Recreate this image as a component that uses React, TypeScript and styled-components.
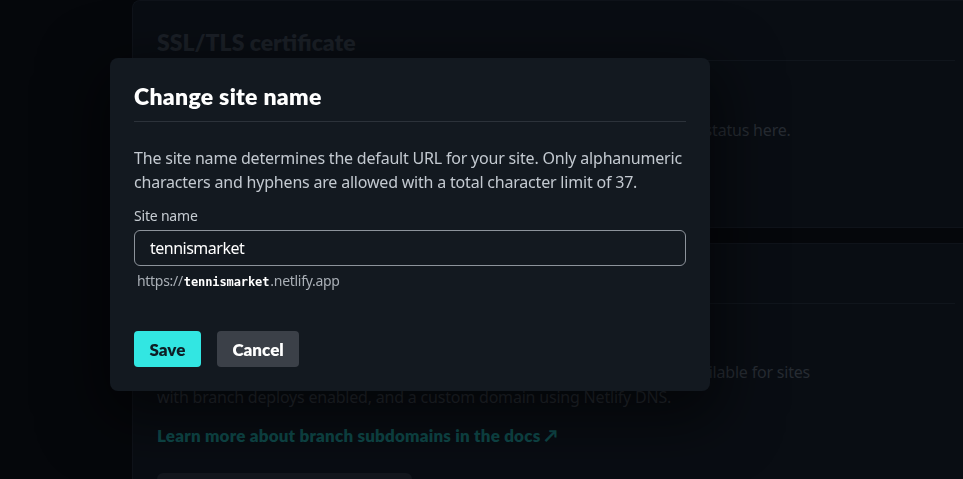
import React from "react";
import styled, { createGlobalStyle } from "styled-components";

const GlobalStyle = createGlobalStyle`
  html, body {
    margin: 0;
    padding: 0;
    background: #05070b;
    font-family: "Noto Sans", "Open Sans", sans-serif;
    overflow: hidden;
  }
`;

const Page = styled.div`
  width: 963px;
  height: 479px;
  padding-left: 132px;
  box-sizing: border-box;
  display: flex;
  flex-direction: column;
  gap: 15px;
  overflow: hidden;
`;

const Card = styled.section<{ $height: number }>`
  height: ${(p) => p.$height}px;
  background: #090d13;
  border: 1px solid #0f131a;
  border-right: none;
  border-radius: 8px 0 0 8px;
  flex-shrink: 0;
`;

const CardHeader = styled.div`
  height: 60px;
  box-sizing: border-box;
  padding: 22px 24px 0;
  display: flex;
  align-items: center;
  margin-right: 8px;
  border-bottom: 1px solid #10151c;
`;

const CardTitle = styled.h2`
  margin: 0;
  font-family: Lato, "Open Sans", sans-serif;
  font-size: 23px;
  font-weight: 800;
  color: #1b2027;
`;

const CardBody = styled.div<{ $pad: string }>`
  padding: ${(p) => p.$pad};
  display: flex;
  flex-direction: column;
  align-items: flex-start;
`;

const Muted = styled.p`
  margin: 0;
  font-size: 16px;
  line-height: 25px;
  letter-spacing: -0.2px;
  color: #262b32;
  white-space: nowrap;
`;

const DocLink = styled.a`
  margin-top: 15px;
  font-family: Lato, "Open Sans", sans-serif;
  font-size: 17px;
  letter-spacing: 0.2px;
  font-weight: 800;
  color: #0f4a4b;
  text-decoration: none;
`;

const GhostButton = styled.div`
  margin-top: 27px;
  width: 255px;
  height: 36px;
  border-radius: 6px;
  background: #13171d;
`;

const Modal = styled.div`
  position: fixed;
  left: 110px;
  top: 58px;
  width: 600px;
  box-sizing: border-box;
  padding: 24px;
  background: #131920;
  border-radius: 8px;
  box-shadow: 0 20px 60px 10px rgba(0, 0, 0, 0.55);
`;

const ModalHeader = styled.div`
  padding-bottom: 11px;
  border-bottom: 1px solid #2c323a;
`;

const ModalTitle = styled.h1`
  margin: 0;
  font-family: Lato, "Open Sans", sans-serif;
  font-size: 23px;
  line-height: 28px;
  letter-spacing: 0.3px;
  font-weight: 800;
  color: #ffffff;
`;

const Description = styled.p`
  margin: 24px 0 0;
  font-size: 16px;
  line-height: 24px;
  letter-spacing: -0.2px;
  white-space: nowrap;
  color: #c3c9d0;
`;

const Label = styled.label`
  display: block;
  margin-top: 12px;
  font-size: 14px;
  line-height: 20px;
  letter-spacing: -0.2px;
  color: #c6ccd2;
`;

const Input = styled.div`
  margin-top: 4px;
  height: 36px;
  box-sizing: border-box;
  border: 1px solid #8d939b;
  border-radius: 6px;
  padding: 0 15px;
  display: flex;
  align-items: center;
  font-size: 16px;
  letter-spacing: -0.5px;
  color: #ffffff;
`;

const Helper = styled.div`
  margin-top: 5px;
  padding-left: 3px;
  display: flex;
  align-items: baseline;
  height: 20px;
  font-size: 14px;
  line-height: 20px;
  letter-spacing: -0.3px;
  color: #a9afb6;
`;

const Mono = styled.strong`
  margin: 0 1px;
  font-family: "DejaVu Sans Mono", monospace;
  font-size: 12px;
  line-height: 16px;
  letter-spacing: -0.1px;
  font-weight: 700;
  color: #ffffff;
`;

const Actions = styled.div`
  margin-top: 40px;
  display: flex;
  gap: 16px;
`;

const Button = styled.button<{ $primary?: boolean }>`
  height: 36px;
  padding: 0 15.5px;
  border: none;
  border-radius: 4px;
  font-family: Lato, "Open Sans", sans-serif;
  font-size: 17px;
  font-weight: 800;
  background: ${(p) => (p.$primary ? "#32e6e2" : "#3b4048")};
  color: ${(p) => (p.$primary ? "#0e1e25" : "#ffffff")};
`;

export default function App() {
  return (
    <>
      <GlobalStyle />
      <Page>
        <Card $height={226}>
          <CardHeader>
            <CardTitle>SSL/TLS certificate</CardTitle>
          </CardHeader>
          <CardBody $pad="57px 24px 0">
            <Muted>Your site has HTTPS enabled. You can review the certificate and its renewal status here.</Muted>
          </CardBody>
        </Card>
        <Card $height={300}>
          {/* header title sits fully under the dialog */}
          <CardHeader />
          <CardBody $pad="56px 24px 0">
            <Muted>Branch subdomains serve branch deploys on your domains. This is only available for sites</Muted>
            <Muted>with branch deploys enabled, and a custom domain using Netlify DNS.</Muted>
            <DocLink>Learn more about branch subdomains in the docs ↗</DocLink>
            <GhostButton />
          </CardBody>
        </Card>
      </Page>
      <Modal>
        <ModalHeader>
          <ModalTitle>Change site name</ModalTitle>
        </ModalHeader>
        <Description>
          The site name determines the default URL for your site. Only alphanumeric
          <br />
          characters and hyphens are allowed with a total character limit of 37.
        </Description>
        <Label>Site name</Label>
        <Input>tennismarket</Input>
        <Helper>
          <span>https://</span>
          <Mono>tennismarket</Mono>
          <span>.netlify.app</span>
        </Helper>
        <Actions>
          <Button $primary>Save</Button>
          <Button>Cancel</Button>
        </Actions>
      </Modal>
    </>
  );
}
